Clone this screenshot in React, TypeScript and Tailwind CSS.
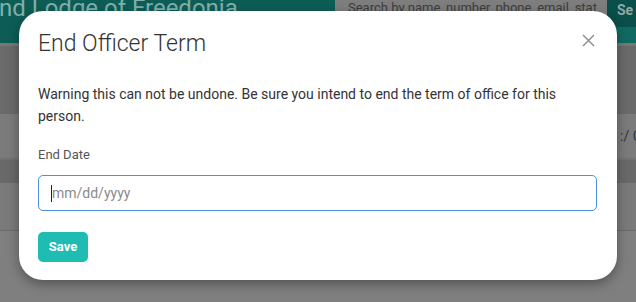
import React from "react";

export default function App() {
  return (
    <div className="relative w-[636px] h-[302px] overflow-hidden bg-[#7f7f7f]" style={{ fontFamily: "Roboto, 'Liberation Sans', sans-serif" }}>
      {/* background page (dimmed) */}
      <div className="flex flex-col">
        <div className="h-[43px] bg-[#0d5d56] flex items-start">
          <div className="w-[335px] h-[43px] overflow-hidden">
            <div className="text-[24px] leading-[24px] text-[#7fb0aa] -mt-[4px] -ml-[1px] whitespace-nowrap">nd Lodge of Freedonia</div>
          </div>
          <div className="w-[272px] h-[27px] bg-[#7e7e7e] text-[13px] leading-[16px] text-[#3d3d3d] pl-[13px] overflow-hidden whitespace-nowrap">Search by name, number, phone, email, stat</div>
          <div className="flex-1 flex flex-col">
            <div className="h-[27px] bg-[#0a4f49] text-[#8fa8a5] font-bold text-[14px] pl-[10px] leading-[20px] overflow-hidden whitespace-nowrap">Se</div>
            <div className="h-[16px] bg-[#116a62]"></div>
          </div>
        </div>
        <div className="h-[3px] bg-[#777]"></div>
        <div className="h-[68px] bg-[#6a6a6a]"></div>
        <div className="h-[44px] bg-[#7b7b7b] flex items-center text-[14px] text-[#333] pl-[620px] overflow-hidden whitespace-nowrap">
          <span>:/ C</span>
        </div>
        <div className="h-[2px] bg-[#727272]"></div>
        <div className="h-[23px] bg-[#696969]"></div>
        <div className="h-[48px] bg-[#7a7a7a] border-b border-[#6a6a6a]"></div>
      </div>

      {/* modal */}
      <div className="absolute left-[19px] top-[11px] w-[598px] h-[269px] bg-white rounded-[24px] shadow-[0_4px_12px_rgba(0,0,0,0.35)]">
        <div className="flex items-start justify-between pl-[19px] pr-[22px] pt-[19px]">
          <h2 className="text-[23px] leading-[28px] font-light text-[#333]">End Officer Term</h2>
          <svg className="mt-[4px]" width="13" height="13" viewBox="0 0 13 13" fill="none" stroke="#8a8a8a" strokeWidth="1.4">
            <path d="M1 1 L12 12 M12 1 L1 12" />
          </svg>
        </div>
        <p className="pl-[19px] pr-[30px] mt-[25px] text-[14px] leading-[22px] text-[#333]">
          Warning this can not be undone. Be sure you intend to end the term of office for this person.
        </p>
        <div className="pl-[19px] mt-[19px] text-[13px] leading-[18px] text-[#555]">End Date</div>
        <div className="pl-[19px] pr-[20px] mt-[11px]">
          <div className="h-[36px] border border-[#4a8fe2] rounded-[5px] flex items-center pl-[12px]">
            <span className="w-px h-[17px] bg-[#222]"></span>
            <span className="text-[14px] text-[#8a8a8a]">mm/dd/yyyy</span>
          </div>
        </div>
        <div className="pl-[19px] mt-[21px]">
          <button className="w-[50px] h-[30px] rounded-[5px] bg-[#1fbcb3] text-white text-[13px] font-bold">Save</button>
        </div>
      </div>
    </div>
  );
}
